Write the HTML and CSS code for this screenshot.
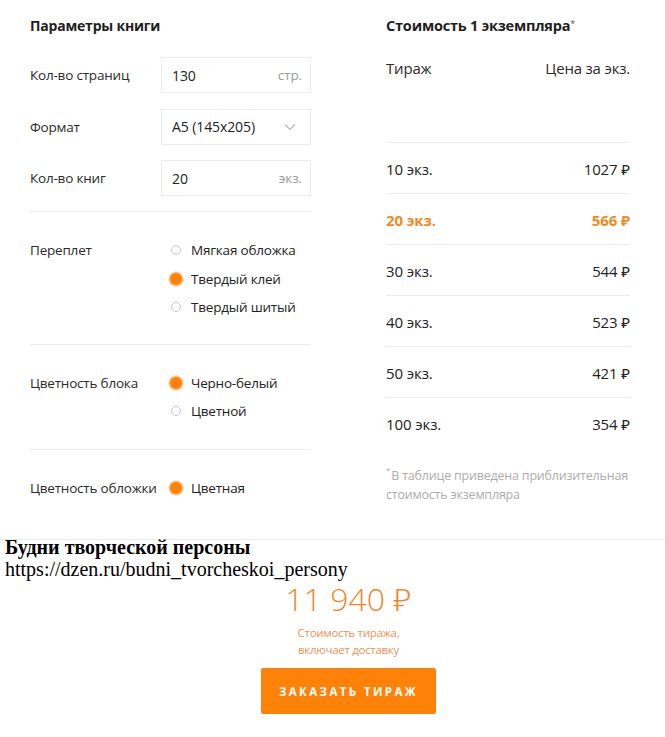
FILE: index.html
```html
<!DOCTYPE html>
<html lang="ru">
<head>
<meta charset="utf-8">
<link rel="stylesheet" href="styles.css">
</head>
<body>
<div class="calc">
  <div class="params">
    <h2 class="title">Параметры книги</h2>
    <div class="field">
      <span class="label">Кол-во страниц</span>
      <div class="box"><span class="val">130</span><span class="unit">стр.</span></div>
    </div>
    <div class="field">
      <span class="label">Формат</span>
      <div class="box"><span class="val">A5 (145x205)</span>
        <svg class="chev" width="12" height="8" viewBox="0 0 12 8"><path d="M1 1.5 L6 6.5 L11 1.5" fill="none" stroke="#b5b5b5" stroke-width="1.1"/></svg>
      </div>
    </div>
    <div class="field">
      <span class="label">Кол-во книг</span>
      <div class="box"><span class="val">20</span><span class="unit">экз.</span></div>
    </div>
    <div class="group g3">
      <span class="glabel">Переплет</span>
      <div class="opts">
        <div class="opt"><span class="radio"></span>Мягкая обложка</div>
        <div class="opt"><span class="radio on"></span>Твердый клей</div>
        <div class="opt"><span class="radio"></span>Твердый шитый</div>
      </div>
    </div>
    <div class="group">
      <span class="glabel">Цветность блока</span>
      <div class="opts">
        <div class="opt"><span class="radio on"></span>Черно-белый</div>
        <div class="opt"><span class="radio"></span>Цветной</div>
      </div>
    </div>
    <div class="group last">
      <span class="glabel">Цветность обложки</span>
      <div class="opts">
        <div class="opt"><span class="radio on"></span>Цветная</div>
      </div>
    </div>
  </div>
  <div class="prices">
    <h2 class="title">Стоимость 1 экземпляра<span class="star">*</span></h2>
    <div class="thead"><span>Тираж</span><span>Цена за экз.</span></div>
    <div class="row"><span>10 экз.</span><span>1027 ₽</span></div>
    <div class="row active"><span>20 экз.</span><span>566 ₽</span></div>
    <div class="row"><span>30 экз.</span><span>544 ₽</span></div>
    <div class="row"><span>40 экз.</span><span>523 ₽</span></div>
    <div class="row"><span>50 экз.</span><span>421 ₽</span></div>
    <div class="row"><span>100 экз.</span><span>354 ₽</span></div>
    <p class="note"><span class="nstar">*</span>В таблице приведена приблизительная стоимость экземпляра</p>
  </div>
</div>
<div class="source">
  <b>Будни творческой персоны</b><br>
  https://dzen.ru/budni_tvorcheskoi_persony
</div>
<div class="total">
  <div class="sum">11 940 ₽</div>
  <div class="sumnote">Стоимость тиража,<br>включает доставку</div>
  <button class="order">ЗАКАЗАТЬ ТИРАЖ</button>
</div>
</body>
</html>
```
FILE: styles.css
```css
* { box-sizing: border-box; }
body {
  margin: 0;
  background: #fff;
  font-family: "Open Sans", "Noto Sans", sans-serif;
  color: #222;
}
.calc {
  display: grid;
  grid-template-columns: 281px 244px;
  column-gap: 75px;
  padding: 0 30px;
  border-bottom: 1px solid #ececec;
}
.title {
  margin: 0;
  padding-top: 14px;
  font-size: 14px;
  line-height: 24px;
  font-weight: 700;
  color: #1e1e1e;
  letter-spacing: -0.2px;
}
.prices .title { font-size: 14.5px; }
.star {
  display: inline-block;
  vertical-align: top;
  margin-top: 4px;
  font-size: 9px;
  line-height: 12px;
  font-weight: 400;
  color: #555;
}
.params .title { margin-bottom: 19px; }
.field {
  display: flex;
  align-items: center;
  height: 36px;
  margin-bottom: 15.5px;
}
.label {
  width: 131px;
  font-size: 13.5px;
  color: #2a2a2a;
  letter-spacing: -0.2px;
}
.box {
  flex: 1;
  height: 36px;
  border: 1px solid #ececec;
  display: flex;
  align-items: center;
  justify-content: space-between;
  padding: 0 8px 0 10px;
  font-size: 14px;
  color: #222;
  letter-spacing: -0.1px;
}
.unit { color: #9a9a9a; font-size: 13.5px; }
.chev { margin-right: 6px; }
.field:nth-of-type(3) { margin-bottom: 15px; }
.group {
  display: flex;
  border-top: 1px solid #ececec;
  padding: 24px 0 23px;
}
.group.g3 { padding-bottom: 22px; }
.group.last { padding-bottom: 37px; }
.glabel {
  width: 139px;
  font-size: 13.5px;
  line-height: 28px;
  color: #2a2a2a;
  letter-spacing: -0.2px;
}
.opts { display: flex; flex-direction: column; }
.opt {
  display: flex;
  align-items: center;
  font-size: 13.5px;
  line-height: 28.5px;
  color: #222;
  letter-spacing: -0.2px;
}
.radio {
  width: 10px;
  height: 10px;
  border: 1px solid #c8c8c8;
  border-radius: 50%;
  margin-right: 10px;
  margin-left: 2px;
}
.radio.on {
  width: 12px;
  height: 12px;
  margin-left: 1px;
  margin-right: 9px;
  border: none;
  background: #ff8208;
  box-shadow: 0 0 0 1.5px #ffc48a;
}
.thead {
  display: flex;
  justify-content: space-between;
  font-size: 15px;
  line-height: 20px;
  padding-top: 20px;
  height: 104px;
  color: #2a2a2a;
  letter-spacing: -0.2px;
}
.row {
  display: flex;
  justify-content: space-between;
  border-top: 1px solid #ececec;
  height: 51px;
  padding-top: 16px;
  font-size: 15px;
  line-height: 20px;
  color: #222;
  letter-spacing: -0.1px;
}
.row.active { color: #f28a1e; font-weight: 700; }
.note {
  margin: 18px 0 0;
  font-size: 12.5px;
  line-height: 19px;
  color: #acacac;
  letter-spacing: -0.2px;
}
.nstar {
  display: inline-block;
  vertical-align: top;
  margin-right: 1px;
  font-size: 8px;
  line-height: 8px;
}
.source {
  padding: 0 5px;
  margin-top: -4px;
  font-family: "Liberation Serif", serif;
  font-size: 20px;
  line-height: 22px;
  color: #000;
}
.total {
  display: flex;
  flex-direction: column;
  align-items: center;
  padding-left: 32px;
}
.sum {
  margin-top: -1px;
  font-size: 32px;
  line-height: 40px;
  font-weight: 300;
  color: #f0892a;
}
.sumnote {
  margin-top: 5px;
  text-align: center;
  font-size: 11.5px;
  line-height: 17px;
  color: #e89456;
  letter-spacing: -0.3px;
}
.order {
  margin-top: 10px;
  width: 175px;
  height: 46px;
  border: none;
  border-radius: 2px;
  background: #ff8208;
  color: #fff;
  font-family: "Open Sans", sans-serif;
  font-weight: 700;
  font-size: 11.5px;
  letter-spacing: 2.4px;
  cursor: pointer;
}
```
